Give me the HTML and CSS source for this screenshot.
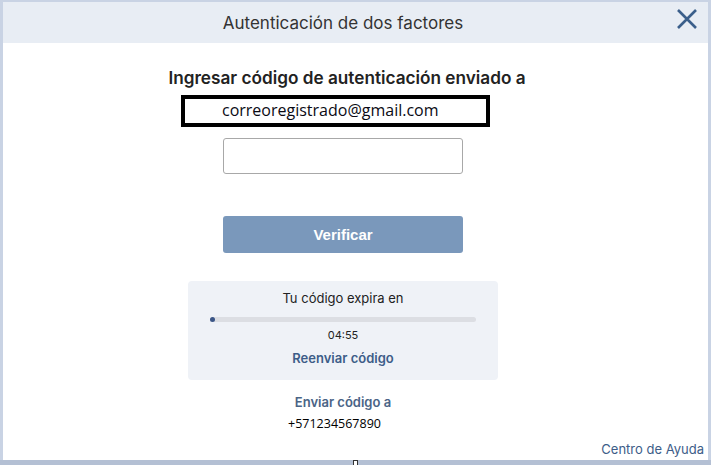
FILE: index.html
```html
<!DOCTYPE html>
<html lang="es">
<head>
    <meta charset="UTF-8">
    <meta name="viewport" content="width=device-width, initial-scale=1.0">
    <title>Autenticación de dos factores</title>
    <link rel="stylesheet" href="styles.css">
</head>
<body>
    <div class="dialog">
        <div class="dialog-header">
            <h1>Autenticación de dos factores</h1>
            <button class="close-btn" aria-label="Cerrar">
                <svg width="22" height="22" viewBox="0 0 22 22">
                    <path d="M2 2 L20 20 M20 2 L2 20" stroke="#3b5f8b" stroke-width="2.6" fill="none"/>
                </svg>
            </button>
        </div>
        <div class="dialog-body">
            <h2>Ingresar código de autenticación enviado a</h2>
            <div class="sent-to">correoregistrado@gmail.com</div>
            <input type="text" class="code-input" name="code" id="code">
            <button class="verify-btn" disabled>Verificar</button>

            <!-- tiempo restante del código -->
            <div class="timer-box">
                <p class="timer-label">Tu código expira en</p>
                <div class="progress"><span class="progress-fill" style="width: 2%"></span></div>
                <p class="timer-value">04:55</p>
                <a href="#" class="resend-link">Reenviar código</a>
            </div>

            <a href="#" class="send-to">Enviar código a</a>
            <p class="phone">+571234567890</p>
        </div>
        <div class="dialog-footer">
            <a href="#">Centro de Ayuda</a>
        </div>
    </div>
    <div class="taskbar"><span class="taskbar-mark"></span></div>
</body>
</html>
```

FILE: styles.css
```css
body {
    margin: 0;
    background-color: #c9d3e4;
    font-family: Inter, 'Noto Sans', Arial, sans-serif;
    color: #222;
    width: 711px;
    height: 465px;
    overflow: hidden;
    display: flex;
    flex-direction: column;
}
.dialog {
    margin: 2px 3px 0 3px;
    height: 458px;
    background: #fff;
    display: flex;
    flex-direction: column;
}
/* cabecera del diálogo */
.dialog-header {
    position: relative;
    height: 41px;
    background: #e8edf4;
    display: flex;
    align-items: center;
    justify-content: center;
    padding-right: 25px;
}
.dialog-header h1 {
    margin: 0;
    font-size: 17px;
    font-weight: 400;
    color: #333;
}
.close-btn {
    position: absolute;
    right: 9px;
    top: 5px;
    background: none;
    border: none;
    padding: 1px;
    cursor: pointer;
    line-height: 0;
}
.dialog-body {
    flex: 1;
    display: flex;
    flex-direction: column;
    align-items: center;
    padding-right: 25px;
}
.dialog-body h2 {
    margin: 25px 0 0 8px;
    font-size: 17.2px;
    line-height: 20px;
    font-weight: 600;
    color: #222;
}
.sent-to {
    align-self: flex-start;
    margin: 7px 0 0 178px;
    height: 24px;
    border: 4px solid #000;
    padding-left: 37px;
    width: 264px;
    font-family: 'Open Sans', Arial, sans-serif;
    font-size: 16px;
    line-height: 23px;
    color: #0a0a14;
}
.code-input {
    margin-top: 11px;
    width: 240px;
    height: 36px;
    box-sizing: border-box;
    border: 1px solid #a8a8a8;
    border-radius: 3px;
    font-size: 15px;
    padding: 0 10px;
}
.code-input:focus {
    outline: none;
    border-color: #3b5f8b;
}
.verify-btn {
    margin-top: 42px;
    width: 240px;
    height: 37px;
    border: none;
    border-radius: 3px;
    background: #7a98bb;
    color: #fff;
    font-family: 'Liberation Sans', Arial, sans-serif;
    font-size: 15px;
    font-weight: bold;
}
/* caja del temporizador */
.timer-box {
    margin-top: 28px;
    width: 310px;
    height: 99px;
    box-sizing: border-box;
    background: #eff2f7;
    border-radius: 4px;
    display: flex;
    flex-direction: column;
    align-items: center;
    padding-top: 9px;
}
.timer-label {
    margin: 0;
    font-size: 13px;
    line-height: 16px;
    color: #222;
}
.progress {
    margin-top: 11px;
    width: 266px;
    height: 5px;
    border-radius: 3px;
    background: #dcdee3;
    display: flex;
}
.progress-fill {
    min-width: 5px;
    border-radius: 3px;
    background: #3b5687;
}
.timer-value {
    margin: 6px 0 0 0;
    font-size: 11px;
    line-height: 14px;
    color: #222;
}
.resend-link {
    margin-top: 8px;
    font-size: 13px;
    line-height: 16px;
    font-weight: 600;
    color: #3d5d88;
    text-decoration: none;
}
.send-to {
    margin-top: 14px;
    font-size: 13px;
    line-height: 16px;
    font-weight: 600;
    color: #4a6486;
    text-decoration: none;
}
.phone {
    margin: 6px 0 0 0;
    padding-right: 17px;
    font-family: 'Open Sans', Arial, sans-serif;
    font-size: 12.5px;
    line-height: 16px;
    color: #000;
}
.dialog-footer {
    display: flex;
    justify-content: flex-end;
    padding: 0 4px 3px 0;
}
.dialog-footer a {
    font-size: 13px;
    line-height: 16px;
    color: #3d5d88;
    text-decoration: none;
}
.taskbar {
    position: relative;
    height: 5px;
    background: #b4c0d4;
}
.taskbar-mark {
    position: absolute;
    left: 353px;
    top: 0;
    width: 5px;
    height: 5px;
    box-sizing: border-box;
    border: 1px solid #333;
    border-bottom: none;
    background: #fff;
}
```
